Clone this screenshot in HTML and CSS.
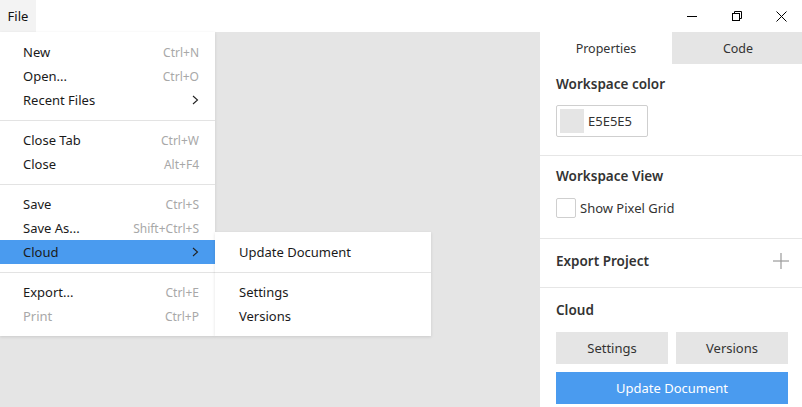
FILE: index.html
```html
<!DOCTYPE html>
<html>
<head>
<meta charset="utf-8">
<link rel="stylesheet" href="styles.css">
</head>
<body>
<div class="window">
  <header class="titlebar">
    <div class="file-btn">File</div>
    <div class="spacer"></div>
    <div class="ctrl">
      <svg width="10" height="10" viewBox="0 0 10 10"><line x1="0" y1="5.5" x2="10" y2="5.5" stroke="#000" stroke-width="1"/></svg>
    </div>
    <div class="ctrl">
      <svg width="10" height="10" viewBox="0 0 10 10" fill="none" stroke="#000" stroke-width="1"><rect x="0.5" y="2.5" width="7" height="7"/><polyline points="2.5,2.5 2.5,0.5 9.5,0.5 9.5,7.5 7.5,7.5"/></svg>
    </div>
    <div class="ctrl">
      <svg width="11" height="11" viewBox="0 0 11 11" fill="none" stroke="#000" stroke-width="1"><line x1="0.5" y1="0.5" x2="10.5" y2="10.5"/><line x1="10.5" y1="0.5" x2="0.5" y2="10.5"/></svg>
    </div>
  </header>
  <div class="main">
    <div class="canvas"></div>
    <aside class="panel">
      <div class="tabs">
        <div class="tab active">Properties</div>
        <div class="tab">Code</div>
      </div>
      <section class="sec sec1">
        <h3 class="heading">Workspace color</h3>
        <div class="color-box"><span class="swatch"></span><span class="hex">E5E5E5</span></div>
      </section>
      <section class="sec sec2">
        <h3 class="heading">Workspace View</h3>
        <label class="check-row"><span class="checkbox"></span><span>Show Pixel Grid</span></label>
      </section>
      <section class="sec sec3">
        <h3 class="heading">Export Project</h3>
        <svg class="plus" width="16" height="16" viewBox="0 0 16 16"><line x1="0" y1="8" x2="16" y2="8" stroke="#9a9a9a" stroke-width="1.2"/><line x1="8" y1="0" x2="8" y2="16" stroke="#9a9a9a" stroke-width="1.2"/></svg>
      </section>
      <section class="sec sec4">
        <h3 class="heading">Cloud</h3>
        <div class="btn-row">
          <button class="btn">Settings</button>
          <button class="btn">Versions</button>
        </div>
        <button class="btn primary">Update Document</button>
      </section>
    </aside>
  </div>

  <div class="menu file-menu">
    <div class="item"><span>New</span><span class="sc">Ctrl+N</span></div>
    <div class="item"><span>Open...</span><span class="sc">Ctrl+O</span></div>
    <div class="item"><span>Recent Files</span><svg class="chev" width="7" height="10" viewBox="0 0 7 10"><polyline points="1,1 5.5,5 1,9" fill="none" stroke="#222" stroke-width="1.1"/></svg></div>
    <div class="sep"></div>
    <div class="item"><span>Close Tab</span><span class="sc">Ctrl+W</span></div>
    <div class="item"><span>Close</span><span class="sc">Alt+F4</span></div>
    <div class="sep"></div>
    <div class="item"><span>Save</span><span class="sc">Ctrl+S</span></div>
    <div class="item"><span>Save As...</span><span class="sc">Shift+Ctrl+S</span></div>
    <div class="item hl"><span>Cloud</span><svg class="chev" width="7" height="10" viewBox="0 0 7 10"><polyline points="1,1 5.5,5 1,9" fill="none" stroke="#222" stroke-width="1.1"/></svg></div>
    <div class="sep"></div>
    <div class="item"><span>Export...</span><span class="sc">Ctrl+E</span></div>
    <div class="item disabled"><span>Print</span><span class="sc">Ctrl+P</span></div>
  </div>

  <div class="menu sub-menu">
    <div class="item"><span>Update Document</span></div>
    <div class="sep"></div>
    <div class="item"><span>Settings</span></div>
    <div class="item"><span>Versions</span></div>
  </div>
</div>
</body>
</html>
```

FILE: styles.css
```css
* { box-sizing: border-box; }
html, body { margin: 0; padding: 0; overflow: hidden; }
body {
  font-family: "Noto Sans", "Open Sans", sans-serif;
  font-size: 14px;
  color: #222;
  background: #fff;
}
.window {
  position: relative;
  width: 804px;
  height: 407px;
  display: flex;
  flex-direction: column;
  overflow: hidden;
}
.titlebar {
  height: 32px;
  display: flex;
  align-items: stretch;
  background: #fff;
  flex: none;
}
.file-btn {
  width: 36px;
  background: #f3f3f3;
  display: flex;
  align-items: center;
  justify-content: center;
  font-size: 13px;
  color: #111;
}
.spacer { flex: 1; }
.ctrl {
  width: 45px;
  display: flex;
  align-items: center;
  justify-content: center;
}
.main {
  flex: 1;
  display: flex;
  min-height: 0;
  box-shadow: inset 0 1px 0 #ececec;
}
.canvas {
  flex: 1;
  background: #e5e5e5;
}
.panel {
  width: 264px;
  background: #fff;
  display: flex;
  flex-direction: column;
}
.tabs {
  display: flex;
  height: 32px;
}
.tab {
  width: 132px;
  display: flex;
  align-items: center;
  justify-content: center;
  font-size: 12.5px;
  color: #333;
  background: #e5e5e5;
}
.tab.active { background: #fff; }
.sec {
  padding: 10px 16px 18px;
  border-bottom: 1px solid #e6e6e6;
}
.heading {
  margin: 0;
  font-size: 13.5px;
  line-height: 20px;
  font-weight: 600;
  color: #333;
}
.sec1 .heading, .sec2 .heading { margin-bottom: 11px; }
.color-box {
  width: 92px;
  height: 32px;
  border: 1px solid #cfcfcf;
  border-radius: 2px;
  display: flex;
  align-items: center;
  padding-left: 3px;
  gap: 4px;
  font-size: 13px;
  color: #333;
}
.swatch {
  width: 24px;
  height: 24px;
  background: #e5e5e5;
}
.sec2 { padding-bottom: 19px; }
.check-row {
  height: 22px;
  display: flex;
  align-items: center;
  gap: 4px;
  font-size: 13px;
  color: #333;
}
.checkbox {
  width: 20px;
  height: 20px;
  border: 1px solid #cfcfcf;
  border-radius: 2px;
  background: #fff;
}
.sec3 {
  display: flex;
  align-items: center;
  justify-content: space-between;
  padding: 12px 15px 16px 16px;
}
.sec4 {
  border-bottom: none;
  padding: 12px 16px 0;
  flex: 1;
}
.sec4 .heading { margin-bottom: 12px; }
.btn-row {
  display: flex;
  gap: 8px;
  margin-bottom: 8px;
}
.btn {
  font-family: inherit;
  border: none;
  height: 32px;
  width: 112px;
  background: #e5e5e5;
  font-size: 13px;
  color: #333;
  padding: 0;
}
.btn.primary {
  width: 232px;
  background: #4a9bef;
  color: #fff;
  display: block;
}
.menu {
  position: absolute;
  background: #fff;
  padding: 8px 0;
  box-shadow: 0 1px 3px rgba(0,0,0,0.12);
}
.file-menu {
  left: 0;
  top: 32px;
  width: 215px;
}
.sub-menu {
  left: 215px;
  top: 232px;
  width: 216px;
}
.item {
  height: 24px;
  display: flex;
  align-items: center;
  justify-content: space-between;
  padding: 0 16px 0 23px;
  font-size: 13px;
  color: #1a1a1a;
}
.sub-menu .item { padding-left: 24px; }
.item .sc {
  font-size: 12px;
  color: #a8a8a8;
}
.item.hl { background: #4a9bef; }
.item.disabled { color: #a8a8a8; }
.sep {
  height: 1px;
  background: #e3e3e3;
  margin: 8px 0 7px;
}
```
